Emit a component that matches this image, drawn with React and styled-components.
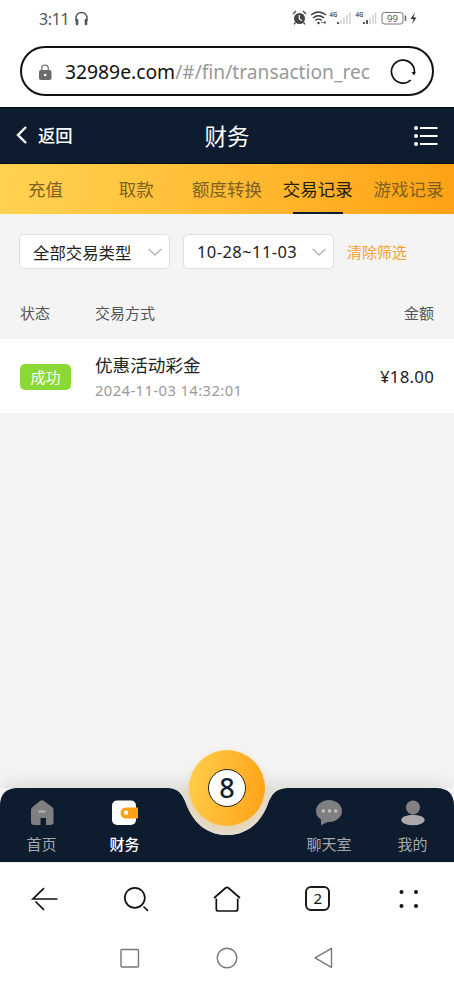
import React from "react";
import styled, { createGlobalStyle } from "styled-components";

const Global = createGlobalStyle`
  * { box-sizing: border-box; }
  body { margin: 0; background: #fff; font-family: "Noto Sans", "Noto Sans CJK SC", sans-serif; }
  svg { display: block; flex: none; overflow: visible; }
`;

const Phone = styled.div`
  width: 454px;
  height: 983px;
  display: flex;
  flex-direction: column;
  overflow: hidden;
  background: #fff;
`;

const Label = styled.span`
  display: block;
  white-space: nowrap;
  font-family: ${(p) => (p.$latin ? '"Noto Sans", sans-serif' : '"Noto Sans CJK SC", sans-serif')};
  font-size: ${(p) => p.$size}px;
  line-height: ${(p) => p.$line || 24}px;
  letter-spacing: ${(p) => p.$track || 0}px;
  font-weight: ${(p) => p.$weight || 400};
  color: ${(p) => p.$color || "#222"};
`;

const StatusBar = styled.div`
  height: 46px;
  padding: 7px 36px 0 39px;
  display: flex;
  align-items: flex-start;
  justify-content: space-between;
`;

const Clock = styled.div`
  display: flex;
  align-items: center;
  gap: 6px;
`;

const Address = styled.div`
  height: 50px;
  margin: 0 20px;
  padding: 2px 15px 0 17px;
  display: flex;
  align-items: center;
  border: 2px solid #111;
  border-radius: 25px;
`;

const Url = styled.div`
  width: 310px;
  margin-left: 14px;
  margin-right: 15px;
  display: flex;
  overflow: hidden;
`;

const Header = styled.header`
  height: 57px;
  margin-top: 11px;
  padding: 0 16px;
  display: grid;
  grid-template-columns: 1fr auto 1fr;
  align-items: center;
  background: #0e1c2f;
  border-top: 1px solid #050b13;
  border-bottom: 1px solid #050b13;
`;

const Back = styled.div`
  display: flex;
  align-items: center;
  gap: 11px;
  padding-bottom: 1px;
`;

const Title = styled.div`
  padding-bottom: 2px;
`;

const Menu = styled.div`
  justify-self: end;
`;

const Tabs = styled.nav`
  height: 50px;
  display: grid;
  grid-template-columns: repeat(5, 1fr);
  background: linear-gradient(100deg, #ffd352 0%, #ffbb33 50%, #ffa114 100%);
`;

const Tab = styled.div`
  display: flex;
  flex-direction: column;
  align-items: center;
  padding-top: 13px;
  justify-content: space-between;
  &::after {
    content: "";
    width: 50px;
    height: 2px;
    background: ${(p) => (p.$active ? "#0e1c2f" : "transparent")};
  }
`;

const Content = styled.main`
  height: 574px;
  flex: none;
  background: #f4f4f4;
`;

const Filters = styled.div`
  height: 75px;
  padding: 20px 19px 0;
  display: flex;
  align-items: flex-start;
  gap: 13px;
`;

const Select = styled.div`
  width: 151px;
  height: 35px;
  padding: 1px 7px 0 13px;
  display: flex;
  align-items: center;
  justify-content: space-between;
  border: 1px solid #dedede;
  border-radius: 5px;
  background: #fff;
`;

const Clear = styled.div`
  padding-top: 6px;
`;

const Columns = styled.div`
  height: 50px;
  padding: 0 20px 2px;
  display: grid;
  grid-template-columns: 75px 1fr auto;
  align-items: center;
`;

const Record = styled.div`
  height: 74px;
  padding: 2px 20px 0;
  display: grid;
  grid-template-columns: 75px 1fr auto;
  align-items: center;
  background: #fff;
`;

const Badge = styled.div`
  width: 51px;
  height: 26px;
  display: flex;
  justify-content: center;
  border-radius: 5px;
  background: #8bd935;
`;

const Dock = styled.footer`
  position: relative;
  height: 74px;
  flex: none;
  display: grid;
  grid-template-columns: 83px 83px 1fr 84px 83px;
`;

const DockShape = styled.svg`
  position: absolute;
  left: 0;
  bottom: 0;
  filter: drop-shadow(0 -2px 10px rgba(70, 65, 40, 0.18));
`;

const DockItem = styled.div`
  position: relative;
  display: flex;
  flex-direction: column;
  align-items: center;
  padding-top: 12px;
  gap: 6px;
`;

const Ball = styled.div`
  position: absolute;
  left: 189px;
  top: -38px;
  width: 76px;
  height: 76px;
  display: grid;
  place-items: center;
  border-radius: 50%;
  background: linear-gradient(100deg, #ffcf4c, #ffa015);
  box-shadow: 0 3px 9px rgba(245, 177, 60, 0.35);
`;

const BallFace = styled.div`
  width: 38px;
  height: 38px;
  display: grid;
  place-items: center;
  border: 1px solid #222;
  border-radius: 50%;
  background: #fff;
`;

const BrowserBar = styled.div`
  position: relative;
  z-index: 1;
  background: #fff;
  height: 72px;
  flex: none;
  display: grid;
  grid-template-columns: repeat(5, 1fr);
  place-items: center;
  border-top: 1px solid #eeeef2;
`;

const PageCount = styled.div`
  width: 25px;
  height: 25px;
  display: grid;
  place-items: center;
  border: 2px solid #1a1a1a;
  border-radius: 6px;
`;

const SystemBar = styled.div`
  height: 48px;
  display: flex;
  justify-content: center;
  align-items: center;
  gap: 76px;
`;

const Headphones = () => (
  <svg width="13" height="14" viewBox="0 0 13 14" fill="none" stroke="#555">
    <path d="M1 9V6a5.500 5.500 0 0 1 11 0v3" strokeWidth="1.400" />
    <path d="M2 8v4M11 8v4" strokeWidth="2.600" strokeLinecap="round" />
  </svg>
);

const StatusIcons = () => (
  <svg width="126" height="22" viewBox="292 7 126 22">
    <circle cx="299.5" cy="18.5" r="5.5" fill="#444" />
    <path d="M293 14l3-3M306 14l-3-3M295.5 22.5L294 24.3M303.5 22.5l1.5 1.8" stroke="#444" strokeWidth="1.3" />
    <path d="M299.3 15v4l2.7 1.7" fill="none" stroke="#fff" strokeWidth="1.2" />
    <g fill="none" stroke="#333" strokeWidth="1.3">
      <path d="M311 15q7.5-6 15 0M313 18q5.500-4.500 11 0M315.300 20.500q3.200-2.600 6.400 0" />
    </g>
    <circle cx="318.500" cy="23" r="1.200" fill="#333" />
    <path d="M321 22.500h5M324 21l2 1.500-2 1.500" fill="none" stroke="#555" strokeWidth=".8" />
    <g fontFamily="Noto Sans" fontSize="7" fontWeight="700" fill="#666">
      <text x="329.500" y="17" textLength="8" lengthAdjust="spacingAndGlyphs">4G</text>
      <text x="355.500" y="17" textLength="8" lengthAdjust="spacingAndGlyphs">4G</text>
    </g>
    <g strokeWidth="1.500">
      <path d="M338 22v2M364 22v2M367 20v4" stroke="#222" />
      <path d="M341 20v4M344 17.500v6.500M347 15v9M350 12.500v11.500M370 17.500v6.500M373 15v9M375.500 12.500v11.500" stroke="#d0d0d0" />
    </g>
    <rect x="382" y="12.500" width="21" height="11.500" rx="2.500" fill="none" stroke="#777" />
    <path d="M405.500 15.500v5.500" stroke="#666" strokeWidth="1.500" />
    <text x="387" y="22" fontFamily="Noto Sans" fontSize="9.500" fill="#555" textLength="11">99</text>
    <path d="M415 12.500l-4.500 6.500h3l-1.500 5 4.500-6.500h-3z" fill="#333" />
  </svg>
);

const Lock = () => (
  <svg width="12" height="17" viewBox="0 0 12 17">
    <path d="M2.700 7V4.500a3.300 3.300 0 0 1 6.600 0V7" fill="none" stroke="#777" strokeWidth="1.300" />
    <rect x="0" y="6" width="12.500" height="10" rx="2" fill="#6b6b6b" />
    <circle cx="6.200" cy="11" r="1.300" fill="#fff" />
  </svg>
);

const Reload = () => (
  <svg width="26" height="26" viewBox="0 0 26 26" fill="none" stroke="#111" strokeWidth="1.700">
    <path d="M20.800 21A11.500 11.500 0 1 1 24.200 15" />
    <path d="M21.500 13l4.200-.1-1.500 3.600z" fill="#111" stroke="none" />
  </svg>
);

const Chevron = () => (
  <svg width="14" height="9" viewBox="0 0 14 9" fill="none" stroke="#b5b5b5" strokeWidth="1.400">
    <path d="M.7 1L7 7l6.300-6" />
  </svg>
);

const dockIcons = {
  home: (
    <svg width="24" height="26" viewBox="0 0 24 26">
      <path d="M10 1q2-1.700 4 0l8 6q1.500 1 1.500 3V22q0 3-3 3H16v-7h-5.500v7H4q-3 0-3-3V10q0-2 1.500-3z" fill="#7f7e80" />
      <path d="M8.500 11.500h7" stroke="#b8b5b6" strokeWidth="2" />
    </svg>
  ),
  wallet: (
    <svg width="26" height="26" viewBox="0 0 26 26">
      <rect x="0" y="0.500" width="24" height="24.500" rx="5" fill="#fff" />
      <path d="M14 7.500h12v11H14a5.500 5.500 0 0 1 0-11z" fill="#fda014" />
      <circle cx="14" cy="12.800" r="2.200" fill="#fff" />
    </svg>
  ),
  chat: (
    <svg width="26" height="26" viewBox="0 0 26 26">
      <path d="M13 0c7.500 0 13 5 13 11S20.500 22 13 22q-3 0-8 3.500V19.500Q0 16.500 0 11C0 5 5.500 0 13 0z" fill="#7f7e80" />
      <g fill="#c3c0c1"><circle cx="7.300" cy="11" r="1.700" /><circle cx="13.500" cy="11" r="1.700" /><circle cx="19.700" cy="11" r="1.700" /></g>
    </svg>
  ),
  user: (
    <svg width="24" height="26" viewBox="0 0 24 26">
      <circle cx="12" cy="7.500" r="7" fill="#828082" />
      <ellipse cx="12" cy="20" rx="11.700" ry="5.300" fill="#aaa8ab" />
    </svg>
  ),
};

const line = { fill: "none", stroke: "#111", strokeWidth: 1.7 };

export default function App() {
  const tabs = ["充值", "取款", "额度转换", "交易记录", "游戏记录"];
  return (
    <>
      <Global />
      <Phone>
        <StatusBar>
          <Clock>
            <Label $latin $size={16} $color="#555" $track={-0.4}>3:11</Label>
            <Headphones />
          </Clock>
          <StatusIcons />
        </StatusBar>
        <Address>
          <Lock />
          <Url>
            <Label $latin $size={19.3} $line={30} $color="#111">32989e.com</Label>
            <Label $latin $size={19.2} $line={30} $color="#999">/#/fin/transaction_rec</Label>
          </Url>
          <Reload />
        </Address>
        <Header>
          <Back>
            <svg width="11" height="18" viewBox="0 0 11 18" fill="none" stroke="#fff" strokeWidth="2.400">
              <path d="M10 1L2 9l8 8" />
            </svg>
            <Label $size={17.3} $color="#fff" $weight={500}>返回</Label>
          </Back>
          <Title><Label $size={22.5} $line={32} $color="#fff">财务</Label></Title>
          <Menu>
            <svg width="24" height="22" viewBox="0 0 24 22" stroke="#fff" strokeWidth="1.900" fill="#fff">
              <path d="M6 3h17.500M6 11h17.500M6 19h17.500" />
              <g stroke="none"><circle cx="2" cy="3" r="2" /><circle cx="2" cy="11" r="2" /><circle cx="2" cy="19" r="2" /></g>
            </svg>
          </Menu>
        </Header>
        <Tabs>
          {tabs.map((t) => (
            <Tab key={t} $active={t === "交易记录"}>
              <Label $size={17.5} $color={t === "交易记录" ? "#241d13" : "#80601f"}>{t}</Label>
            </Tab>
          ))}
        </Tabs>
        <Content>
          <Filters>
            <Select><Label $size={16.4}>全部交易类型</Label><Chevron /></Select>
            <Select><Label $latin $size={16.5} $line={26} $track={0.42}>10-28~11-03</Label><Chevron /></Select>
            <Clear><Label $size={15} $color="#f6a130">清除筛选</Label></Clear>
          </Filters>
          <Columns>
            <Label $size={15} $color="#555">状态</Label>
            <Label $size={15} $color="#555">交易方式</Label>
            <Label $size={15} $color="#555">金额</Label>
          </Columns>
          <Record>
            <Badge><Label $size={15} $line={25} $color="#fff">成功</Label></Badge>
            <div>
              <Label $size={17.6} $line={27}>优惠活动彩金</Label>
              <Label $latin $size={14.8} $line={25} $track={0.4} $color="#999">2024-11-03 14:32:01</Label>
            </div>
            <Label $latin $size={16.8} $track={0.25}>¥18.00</Label>
          </Record>
        </Content>
        <Dock>
          <DockShape width="454" height="74" viewBox="0 0 454 74">
            <path d="M0 74V18Q0 0 18 0H168C178 0 183 6 187 18C195 37 209 47 227 47S259 37 267 18C271 6 276 0 288 0H436Q454 0 454 18V74Z" fill="#0e1c2f" />
            <path d="M168 0C178 0 183 6 187 18C195 37 209 47 227 47S259 37 267 18C271 6 276 0 288 0Z" fill="#e3dfd4" />
          </DockShape>
          <DockItem>{dockIcons.home}<Label $size={15} $color="#a5a8ae">首页</Label></DockItem>
          <DockItem>{dockIcons.wallet}<Label $size={15} $color="#fff" $weight={500}>财务</Label></DockItem>
          <span />
          <DockItem>{dockIcons.chat}<Label $size={15} $color="#a5a8ae">聊天室</Label></DockItem>
          <DockItem>{dockIcons.user}<Label $size={15} $color="#a5a8ae">我的</Label></DockItem>
          <Ball><BallFace><Label $latin $size={27} $line={34} $weight={500} $color="#0e1c2f">8</Label></BallFace></Ball>
        </Dock>
        <BrowserBar>
          <svg width="26" height="24" viewBox="0 0 26 24" {...line}><path d="M25.500 12H1L12 1.200M3.500 14.500L12 22.800" /></svg>
          <svg width="26" height="26" viewBox="0 0 26 26" {...line}><circle cx="11.800" cy="11.800" r="10" /><path d="M20.500 20.500l4.500 4.300" /></svg>
          <svg width="28" height="26" viewBox="0 0 28 26" {...line}><path d="M1 12L12.500 2q1.500-1.300 3 0L27 12M3.300 12.500V23q0 2 2 2h17.400q2 0 2-2V12.500" /></svg>
          <PageCount><Label $latin $size={15} $line={21} $color="#111">2</Label></PageCount>
          <svg width="20" height="18" viewBox="0 0 20 18" fill="#111"><circle cx="2.500" cy="2" r="2" /><circle cx="17" cy="2" r="2" /><circle cx="2.500" cy="16" r="2" /><circle cx="17" cy="16" r="2" /></svg>
        </BrowserBar>
        <SystemBar>
          <svg width="20" height="20" viewBox="0 0 20 20" fill="none" stroke="#777" strokeWidth="1.400"><rect x="1" y="1.500" width="17.500" height="17.500" rx="1" /></svg>
          <svg width="22" height="22" viewBox="0 0 22 22" fill="none" stroke="#777" strokeWidth="1.400"><circle cx="11" cy="11" r="9.800" /></svg>
          <svg width="20" height="22" viewBox="0 0 20 22" fill="none" stroke="#777" strokeWidth="1.400" strokeLinejoin="round"><path d="M17.500 1.300v19L1 10.800z" /></svg>
        </SystemBar>
      </Phone>
    </>
  );
}
